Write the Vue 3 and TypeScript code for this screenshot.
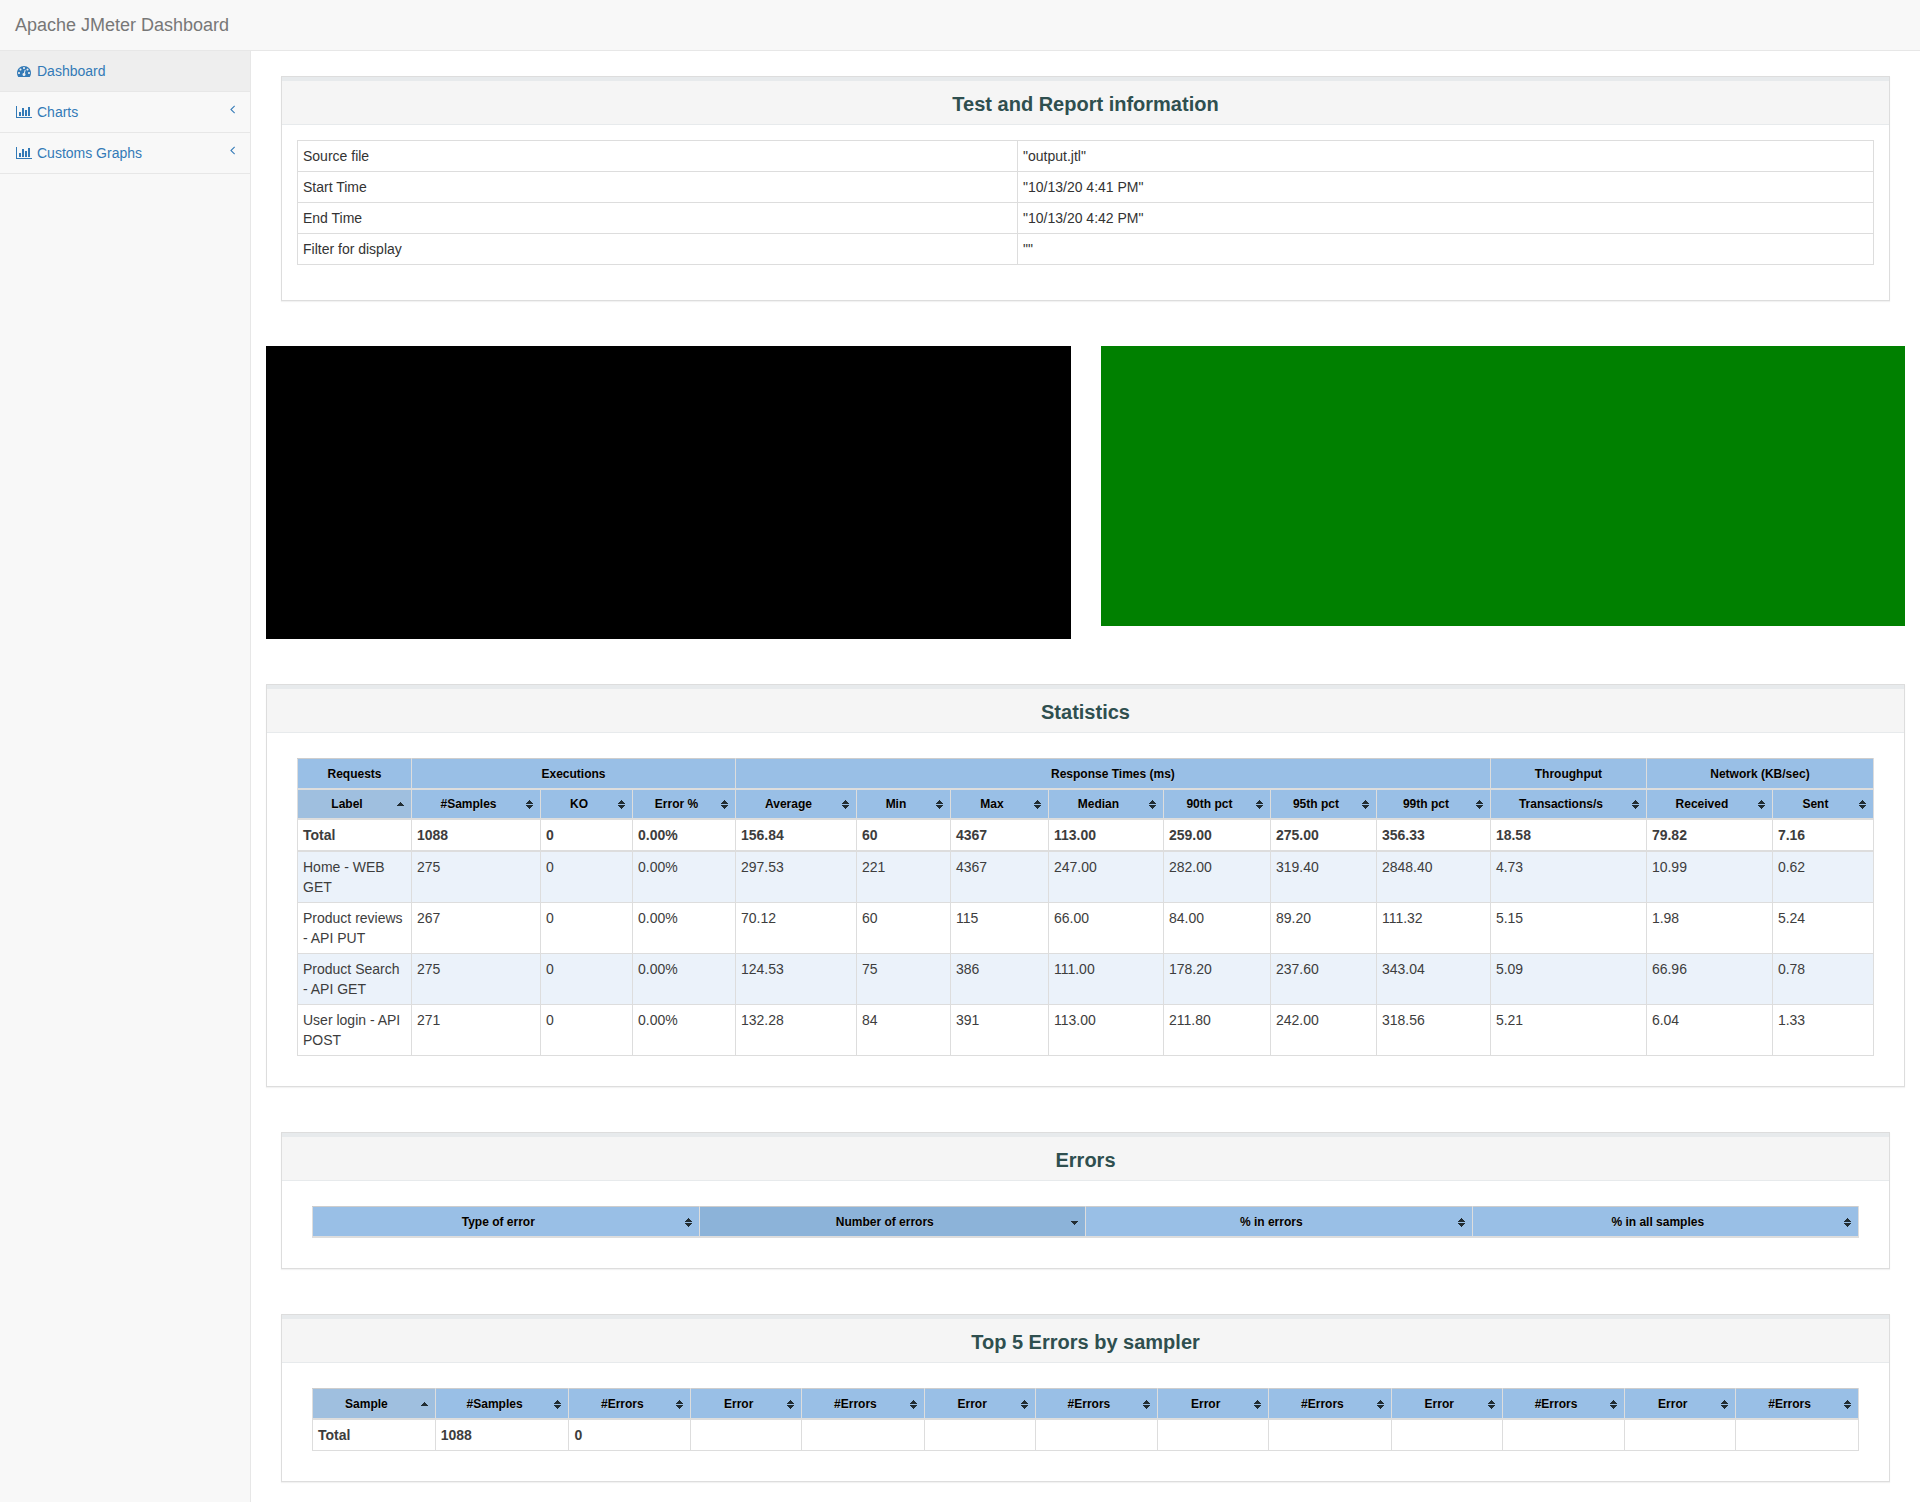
<script setup lang="ts">
import { computed, ref } from 'vue'

type Direction = 'ascending' | 'descending'
interface Column { label: string; width: number }

const share = (width: number, columns: Column[]): string =>
  `${(width / columns.reduce((sum, c) => sum + c.width, 0)) * 100}%`

const info: [string, string][] = [
  ['Source file', '"output.jtl"'],
  ['Start Time', '"10/13/20 4:41 PM"'],
  ['End Time', '"10/13/20 4:42 PM"'],
  ['Filter for display', '""'],
]

const groups = [
  { label: 'Requests', span: 1 },
  { label: 'Executions', span: 3 },
  { label: 'Response Times (ms)', span: 7 },
  { label: 'Throughput', span: 1 },
  { label: 'Network (KB/sec)', span: 2 },
]

const statColumns: Column[] = [
  { label: 'Label', width: 114 },
  { label: '#Samples', width: 129 },
  { label: 'KO', width: 92 },
  { label: 'Error %', width: 103 },
  { label: 'Average', width: 121 },
  { label: 'Min', width: 94 },
  { label: 'Max', width: 98 },
  { label: 'Median', width: 115 },
  { label: '90th pct', width: 107 },
  { label: '95th pct', width: 106 },
  { label: '99th pct', width: 114 },
  { label: 'Transactions/s', width: 156 },
  { label: 'Received', width: 126 },
  { label: 'Sent', width: 101 },
]

const statTotal = ['Total', '1088', '0', '0.00%', '156.84', '60', '4367', '113.00', '259.00', '275.00', '356.33', '18.58', '79.82', '7.16']

const statRows = [
  ['Home - WEB GET', '275', '0', '0.00%', '297.53', '221', '4367', '247.00', '282.00', '319.40', '2848.40', '4.73', '10.99', '0.62'],
  ['Product reviews - API PUT', '267', '0', '0.00%', '70.12', '60', '115', '66.00', '84.00', '89.20', '111.32', '5.15', '1.98', '5.24'],
  ['Product Search - API GET', '275', '0', '0.00%', '124.53', '75', '386', '111.00', '178.20', '237.60', '343.04', '5.09', '66.96', '0.78'],
  ['User login - API POST', '271', '0', '0.00%', '132.28', '84', '391', '113.00', '211.80', '242.00', '318.56', '5.21', '6.04', '1.33'],
]

const errorColumns: Column[] = [
  { label: 'Type of error', width: 1 },
  { label: 'Number of errors', width: 1 },
  { label: '% in errors', width: 1 },
  { label: '% in all samples', width: 1 },
]

const topColumns: Column[] = [
  { label: 'Sample', width: 123 },
  { label: '#Samples', width: 134 },
  { label: '#Errors', width: 122 },
  ...Array.from({ length: 5 }, () => [
    { label: 'Error', width: 111 },
    { label: '#Errors', width: 123 },
  ]).flat(),
]

const topTotal = topColumns.map((_, i) => ['Total', '1088', '0'][i] ?? '')

interface Sort { column: number; direction: Direction }
const statSort = ref<Sort>({ column: 0, direction: 'ascending' })
const errorSort = ref<Sort>({ column: 1, direction: 'descending' })
const topSort = ref<Sort>({ column: 0, direction: 'ascending' })

function nextSort(current: Sort, column: number): Sort {
  const flip = current.column === column && current.direction === 'ascending'
  return { column, direction: flip ? 'descending' : 'ascending' }
}

function stateOf(sort: Sort, column: number): Direction | 'none' {
  return sort.column === column ? sort.direction : 'none'
}

const sortIcons = {
  none: 'M3 0h1v1h1v1h1v1h1v1H0V3h1V2h1V1h1zM0 5h7v1H6v1H5v1H4v1H3V8H2V7H1V6H0z',
  ascending: 'M3 2h1v1h1v1h1v1h1v1H0V5h1V4h1V3h1z',
  descending: 'M0 3h7v1H6v1H5v1H4v1H3V6H2V5H1V4H0z',
}

const sortedStats = computed(() => {
  const { column, direction } = statSort.value
  const sign = direction === 'ascending' ? 1 : -1
  return [...statRows].sort((a, b) =>
    sign * (column === 0
      ? a[0].toLowerCase().localeCompare(b[0].toLowerCase())
      : parseFloat(a[column]) - parseFloat(b[column])))
})
</script>

<template>
  <div class="layout">
    <header class="navbar">
      <a class="brand" href="#">Apache JMeter Dashboard</a>
    </header>

    <div class="columns">
      <nav class="sidebar">
        <ul>
          <li>
            <a class="active" href="#">
              <span class="icon">
                <svg width="14" height="14" viewBox="0 0 1792 1792" aria-hidden="true"><path d="M384 1152q0-53-37.5-90.5t-90.5-37.5-90.5 37.5-37.5 90.5 37.5 90.5 90.5 37.5 90.5-37.5 37.5-90.5zm192-448q0-53-37.5-90.5t-90.5-37.5-90.5 37.5-37.5 90.5 37.5 90.5 90.5 37.5 90.5-37.5 37.5-90.5zm428 481l101-382q6-26-7.5-48.5t-38.5-29.5-48 6.5-30 39.5l-101 382q-60 5-107 43.5t-63 98.5q-20 77 20 146t117 89 146-20 89-117q16-60-6-117t-72-91zm660-33q0-53-37.5-90.5t-90.5-37.5-90.5 37.5-37.5 90.5 37.5 90.5 90.5 37.5 90.5-37.5 37.5-90.5zm-640-640q0-53-37.5-90.5t-90.5-37.5-90.5 37.5-37.5 90.5 37.5 90.5 90.5 37.5 90.5-37.5 37.5-90.5zm448 192q0-53-37.5-90.5t-90.5-37.5-90.5 37.5-37.5 90.5 37.5 90.5 90.5 37.5 90.5-37.5 37.5-90.5zm320 448q0 261-141 483-19 29-54 29h-1402q-35 0-54-29-141-221-141-483 0-182 71-348t191-286 286-191 348-71 348 71 286 191 191 286 71 348z" /></svg>
              </span>
              <span>Dashboard</span>
            </a>
          </li>
          <li v-for="label in ['Charts', 'Customs Graphs']" :key="label">
            <a href="#">
              <span class="icon">
                <svg width="16" height="14" viewBox="0 0 2048 1792" aria-hidden="true"><path d="M640 896v512h-256v-512h256zm384-512v1024h-256v-1024h256zm1024 1152v128h-2048v-1536h128v1408h1920zm-640-896v768h-256v-768h256zm384-384v1152h-256v-1152h256z" /></svg>
              </span>
              <span>{{ label }}</span>
              <svg class="arrow" width="5" height="14" viewBox="0 0 640 1792" aria-hidden="true"><path d="M627 544q0 13-10 23l-393 393 393 393q10 10 10 23t-10 23l-50 50q-10 10-23 10t-23-10l-466-466q-10-10-10-23t10-23l466-466q10-10 23-10t23 10l50 50q10 10 10 23z" /></svg>
            </a>
          </li>
        </ul>
      </nav>

      <main class="content">
        <section class="panel inset">
          <h2>Test and Report information</h2>
          <div class="body">
            <table class="info">
              <colgroup><col class="info-name"><col></colgroup>
              <tbody>
                <tr v-for="[name, value] in info" :key="name">
                  <td>{{ name }}</td>
                  <td>{{ value }}</td>
                </tr>
              </tbody>
            </table>
          </div>
        </section>

        <div class="blocks">
          <div class="block black"></div>
          <div class="block green"></div>
        </div>

        <section class="panel">
          <h2>Statistics</h2>
          <div class="body wide">
            <table class="sorter">
              <colgroup>
                <col v-for="(c, i) in statColumns" :key="i" :style="{ width: share(c.width, statColumns) }">
              </colgroup>
              <thead>
                <tr>
                  <th v-for="g in groups" :key="g.label" :colspan="g.span" scope="colgroup">{{ g.label }}</th>
                </tr>
                <tr>
                  <th v-for="(c, i) in statColumns" :key="i" scope="col" :aria-sort="stateOf(statSort, i)" :class="stateOf(statSort, i)">
                    <button type="button" @click="statSort = nextSort(statSort, i)">
                      <span>{{ c.label }}</span>
                      <svg width="7" height="9" viewBox="0 0 7 9" shape-rendering="crispEdges" aria-hidden="true"><path :d="sortIcons[stateOf(statSort, i)]" /></svg>
                    </button>
                  </th>
                </tr>
              </thead>
              <tbody>
                <tr class="total"><td v-for="(v, i) in statTotal" :key="i">{{ v }}</td></tr>
              </tbody>
              <tbody class="striped">
                <tr v-for="row in sortedStats" :key="row[0]">
                  <td v-for="(v, i) in row" :key="i">{{ v }}</td>
                </tr>
              </tbody>
            </table>
          </div>
        </section>

        <section class="panel inset">
          <h2>Errors</h2>
          <div class="body wide">
            <table class="sorter">
              <colgroup>
                <col v-for="(c, i) in errorColumns" :key="i" :style="{ width: share(c.width, errorColumns) }">
              </colgroup>
              <thead>
                <tr>
                  <th v-for="(c, i) in errorColumns" :key="i" scope="col" :aria-sort="stateOf(errorSort, i)" :class="stateOf(errorSort, i)">
                    <button type="button" @click="errorSort = nextSort(errorSort, i)">
                      <span>{{ c.label }}</span>
                      <svg width="7" height="9" viewBox="0 0 7 9" shape-rendering="crispEdges" aria-hidden="true"><path :d="sortIcons[stateOf(errorSort, i)]" /></svg>
                    </button>
                  </th>
                </tr>
              </thead>
            </table>
          </div>
        </section>

        <section class="panel inset">
          <h2>Top 5 Errors by sampler</h2>
          <div class="body wide">
            <table class="sorter">
              <colgroup>
                <col v-for="(c, i) in topColumns" :key="i" :style="{ width: share(c.width, topColumns) }">
              </colgroup>
              <thead>
                <tr>
                  <th v-for="(c, i) in topColumns" :key="i" scope="col" :aria-sort="stateOf(topSort, i)" :class="stateOf(topSort, i)">
                    <button type="button" @click="topSort = nextSort(topSort, i)">
                      <span>{{ c.label }}</span>
                      <svg width="7" height="9" viewBox="0 0 7 9" shape-rendering="crispEdges" aria-hidden="true"><path :d="sortIcons[stateOf(topSort, i)]" /></svg>
                    </button>
                  </th>
                </tr>
              </thead>
              <tbody>
                <tr class="total"><td v-for="(v, i) in topTotal" :key="i">{{ v }}</td></tr>
              </tbody>
            </table>
          </div>
        </section>
      </main>
    </div>
  </div>
</template>

<style>
body {
  margin: 0;
  background: #f8f8f8;
}
</style>

<style scoped>
.layout {
  display: flex;
  flex-direction: column;
  min-height: 100vh;
  font: 14px/20px "Liberation Sans", Arial, sans-serif;
  color: #333;
}

.layout *,
.layout {
  box-sizing: border-box;
}

a {
  color: #337ab7;
  text-decoration: none;
}

.navbar {
  display: flex;
  border-bottom: 1px solid #e7e7e7;
  background: #f8f8f8;
}

.brand {
  padding: 15px;
  font-size: 18px;
  color: #777;
}

.columns {
  display: flex;
  flex: 1;
}

.sidebar {
  flex: 0 0 250px;
}

.sidebar ul {
  margin: 0;
  padding: 0;
  list-style: none;
}

.sidebar li {
  border-bottom: 1px solid #e7e7e7;
}

.sidebar a {
  display: flex;
  align-items: center;
  gap: 4px;
  padding: 10px 15px;
}

.sidebar a.active {
  background: #eee;
}

.sidebar svg {
  display: block;
  fill: currentColor;
}

.icon {
  display: flex;
  justify-content: center;
  width: 18px;
}

.arrow {
  align-self: flex-start;
  margin-left: auto;
}

.content {
  display: flex;
  flex: 1;
  flex-direction: column;
  gap: 45px;
  min-width: 0;
  padding: 25px 15px 20px;
  border-left: 1px solid #e7e7e7;
  background: #fff;
}

.panel {
  border: 1px solid #ddd;
  background: #fff;
  box-shadow: 0 1px 1px rgba(0, 0, 0, 0.05);
}

.inset {
  margin: 0 15px;
}

.panel h2 {
  margin: 0;
  padding: 12px 15px 9px;
  border-top: 4px solid #e7eaec;
  border-bottom: 1px solid #e7eaec;
  background: #f5f5f5;
  font-size: 20px;
  line-height: 22px;
  text-align: center;
  color: #2f4f4f;
}

.body {
  padding: 15px 15px 35px;
}

.body.wide {
  padding: 25px 30px 30px;
}

.blocks {
  display: flex;
  align-items: flex-start;
  gap: 30px;
}

.block {
  flex: 1;
}

.black {
  height: 293px;
  background: #000;
}

.green {
  height: 280px;
  background: #008000;
}

table {
  width: 100%;
  border-collapse: collapse;
  table-layout: fixed;
}

th,
td {
  padding: 5px;
  border: 1px solid #ddd;
  text-align: left;
  vertical-align: top;
}

.info-name {
  width: 720px;
}

.sorter th {
  border-bottom-width: 2px;
  background: #99bfe6;
  font-size: 12px;
  line-height: 18px;
  text-align: center;
  text-shadow: 0 1px 0 rgba(204, 204, 204, 0.7);
  color: #000;
}

.sorter tr:first-child th {
  padding-top: 6px;
  border-top-color: #cdcdcd;
}

.sorter th.ascending {
  background: #9fbfdf;
}

.sorter th.descending {
  background: #8cb3d9;
}

.sorter button {
  display: flex;
  align-items: center;
  width: 100%;
  padding: 0 2px 0 0;
  border: 0;
  background: none;
  font: inherit;
  text-shadow: inherit;
  color: inherit;
  cursor: pointer;
}

.sorter button span {
  flex: 1;
  padding-right: 6px;
}

.sorter button svg {
  flex: none;
  fill: #222d33;
}

.sorter td {
  color: #3d3d3d;
}

.sorter tbody + tbody {
  border-top: 2px solid #ddd;
}

.striped tr:nth-child(odd) {
  background: #ebf2fa;
}

.total {
  height: 30px;
  font-weight: bold;
}
</style>
